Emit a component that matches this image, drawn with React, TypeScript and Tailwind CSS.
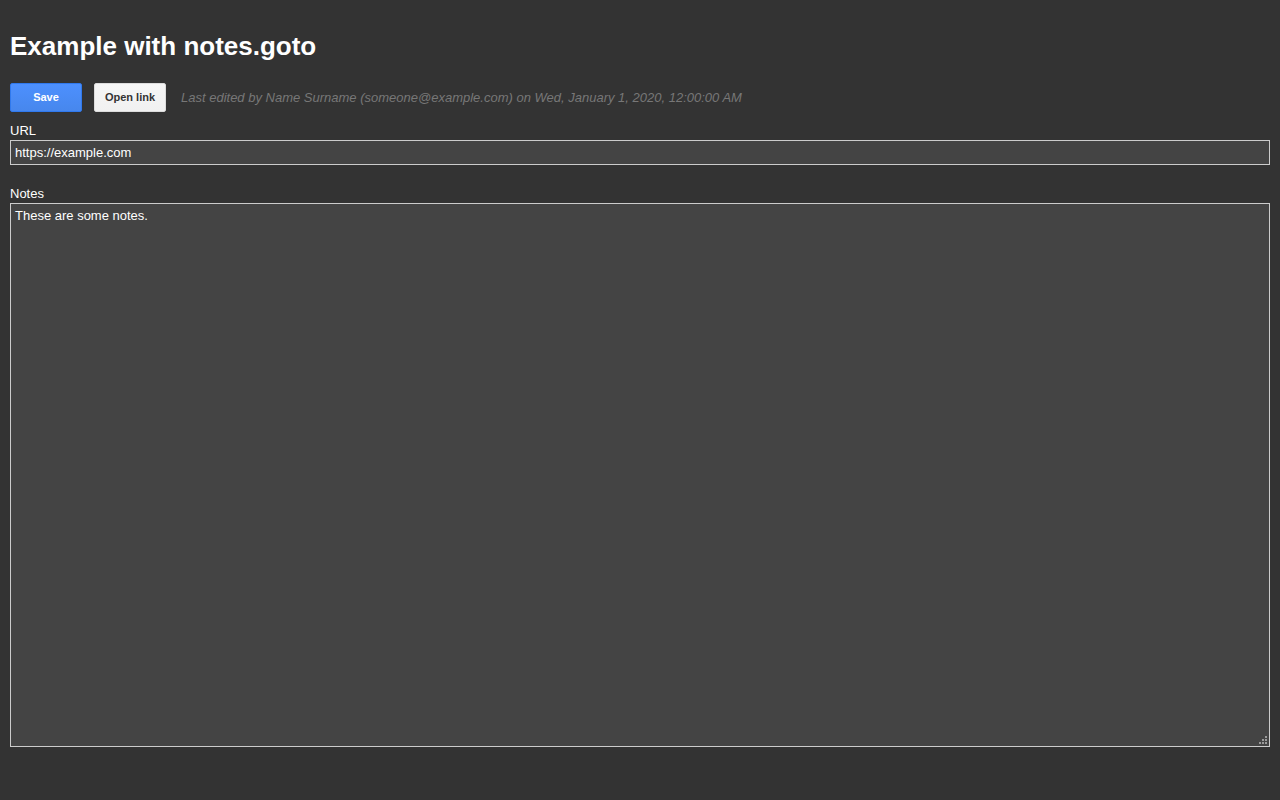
import React from "react";

export default function App() {
  return (
    <div
      className="min-h-[800px] w-full bg-[#333333] px-[10px] pt-[31px] text-white"
      style={{ fontFamily: '"Liberation Sans", Arial, sans-serif' }}
    >
      <h1 className="m-0 text-[26px] font-bold leading-[30px] text-white">Example with notes.goto</h1>
      <div className="mt-[22px] flex items-center">
        <button className="h-[29px] w-[72px] rounded-[2px] border border-[#3079ed] bg-gradient-to-b from-[#4d90fe] to-[#4787ed] text-[11px] font-bold text-white">
          Save
        </button>
        <button className="ml-[12px] h-[29px] w-[72px] rounded-[2px] border border-[#dcdcdc] bg-gradient-to-b from-[#f5f5f5] to-[#f1f1f1] text-[11px] font-bold text-[#333333]">
          Open link
        </button>
        <span className="ml-[15px] text-[13px] italic text-[#777777]">
          Last edited by Name Surname (someone@example.com) on Wed, January 1, 2020, 12:00:00 AM
        </span>
      </div>
      <div className="mt-[10px] text-[13px] leading-[18px]">URL</div>
      <input
        defaultValue="https://example.com"
        className="block h-[25px] w-full border border-[#cccccc] bg-[#444444] px-[4px] text-[13px] text-white outline-none"
      />
      <div className="mt-[20px] text-[13px] leading-[18px]">Notes</div>
      <div className="relative">
        <textarea
          defaultValue="These are some notes."
          className="block h-[544px] w-full resize-none border border-[#cccccc] bg-[#444444] px-[4px] py-[4px] text-[13px] leading-[15px] text-white outline-none"
        />
        <svg
          className="pointer-events-none absolute bottom-[3px] right-[3px]"
          width="8"
          height="8"
          viewBox="0 0 8 8"
        >
          <rect x="6" y="0" width="2" height="2" fill="#9a9a9a" />
          <rect x="3" y="3" width="2" height="2" fill="#9a9a9a" />
          <rect x="6" y="3" width="2" height="2" fill="#9a9a9a" />
          <rect x="0" y="6" width="2" height="2" fill="#9a9a9a" />
          <rect x="3" y="6" width="2" height="2" fill="#9a9a9a" />
          <rect x="6" y="6" width="2" height="2" fill="#9a9a9a" />
        </svg>
      </div>
    </div>
  );
}
